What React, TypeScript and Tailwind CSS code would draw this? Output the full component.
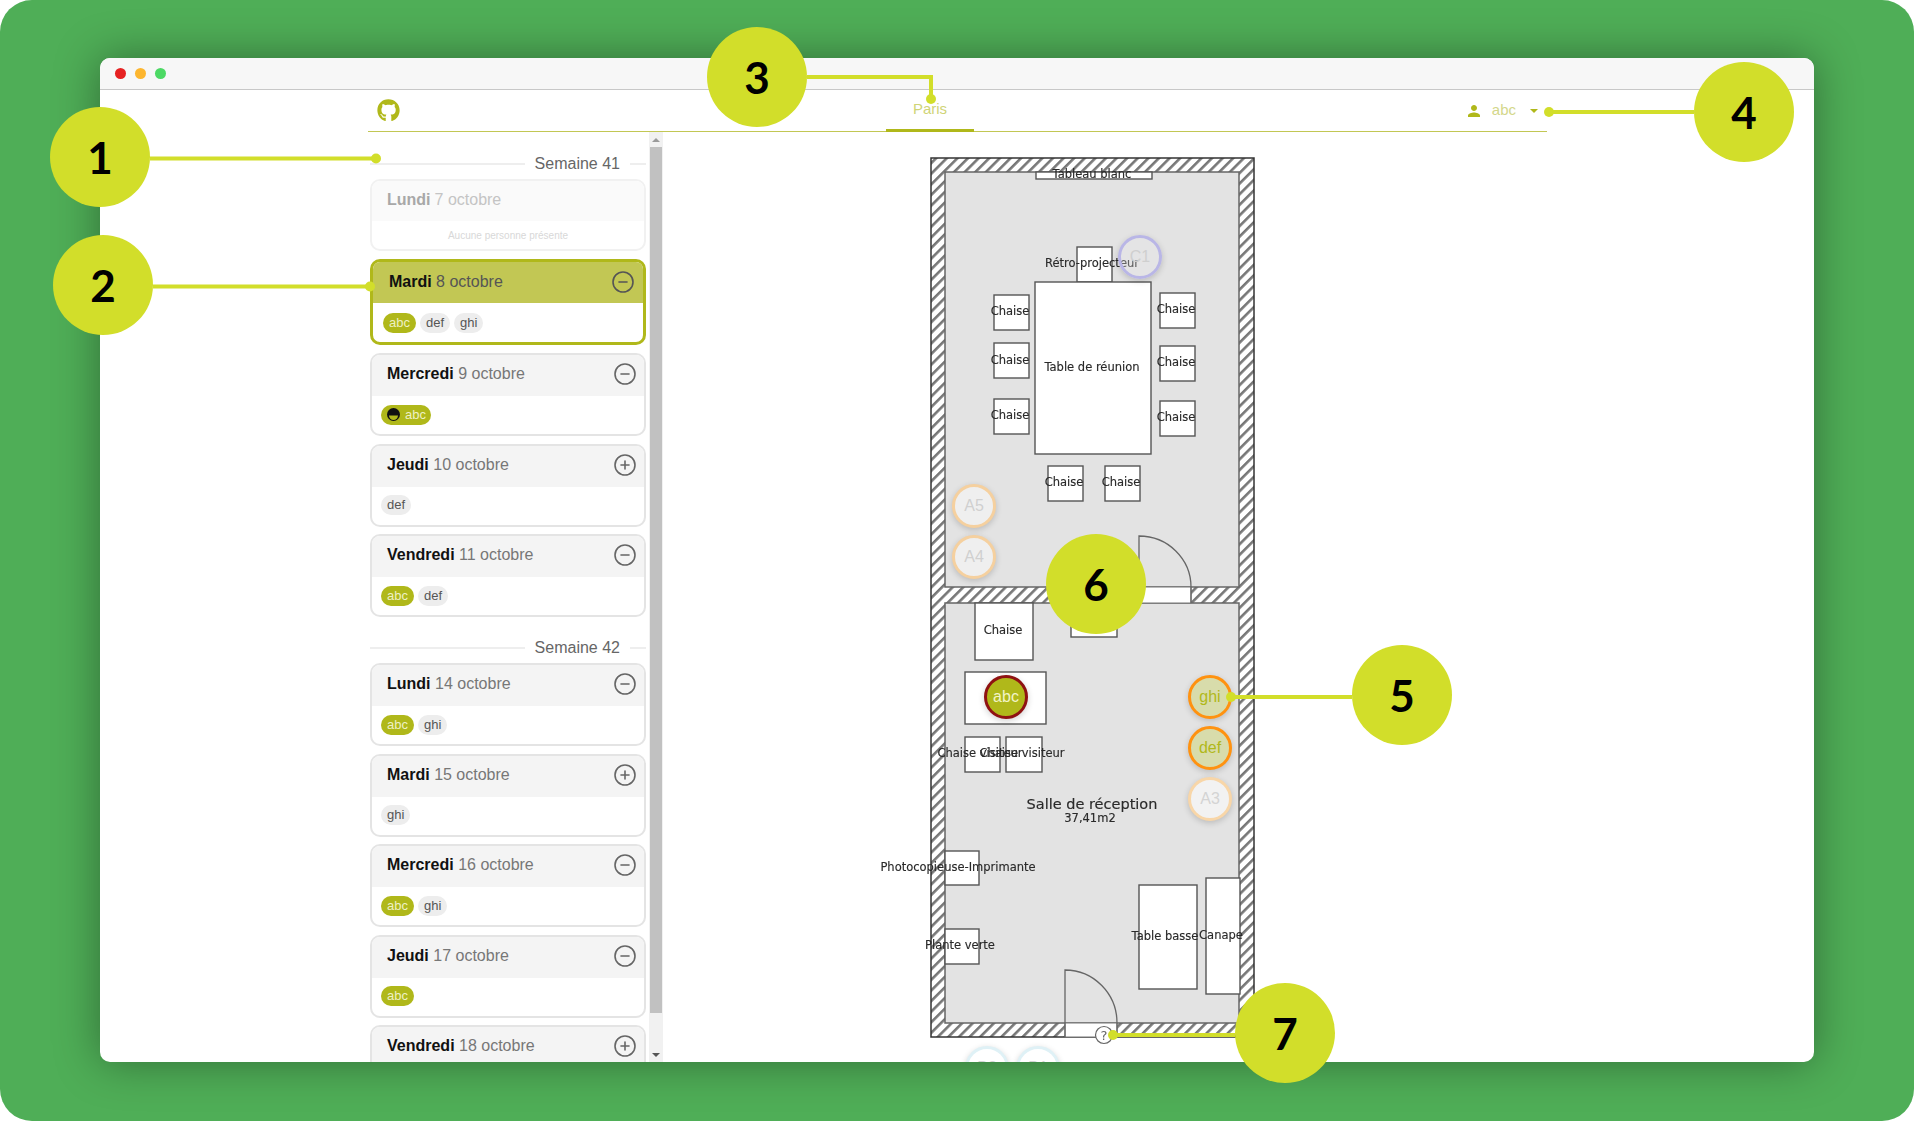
import { CircleMinus, CirclePlus } from "lucide-react";
import { FaGithub } from "react-icons/fa";

type Day = { name: string; date: string; action: "minus" | "plus"; people: string[]; avatar?: boolean };

const WEEK_41: Day[] = [
  { name: "Mercredi", date: "9 octobre", action: "minus", people: ["abc"], avatar: true },
  { name: "Jeudi", date: "10 octobre", action: "plus", people: ["def"] },
  { name: "Vendredi", date: "11 octobre", action: "minus", people: ["abc", "def"] },
];

const WEEK_42: Day[] = [
  { name: "Lundi", date: "14 octobre", action: "minus", people: ["abc", "ghi"] },
  { name: "Mardi", date: "15 octobre", action: "plus", people: ["ghi"] },
  { name: "Mercredi", date: "16 octobre", action: "minus", people: ["abc", "ghi"] },
  { name: "Jeudi", date: "17 octobre", action: "minus", people: ["abc"] },
  { name: "Vendredi", date: "18 octobre", action: "plus", people: [] },
];

// x, y are the centre of the seat in page coordinates
const SEATS = [
  { label: "C1", x: 1140, y: 257, cls: "border-[#b9b6e6] bg-[#e8e8ec]/30 text-[#cfcfcf]" },
  { label: "A5", x: 974, y: 506, cls: "border-[#f5d09f] bg-[#efefef] text-[#d0d0d0]" },
  { label: "A4", x: 974, y: 557, cls: "border-[#f5d09f] bg-[#efefef] text-[#d0d0d0]" },
  { label: "abc", x: 1006, y: 697, cls: "border-[#8f1212] bg-[#b0b81a] text-[#f2f4c8]" },
  { label: "ghi", x: 1210, y: 697, cls: "border-[#ff9210] bg-[#d8dcab] text-[#b0b81a]" },
  { label: "def", x: 1210, y: 748, cls: "border-[#ff9210] bg-[#d8dcab] text-[#b0b81a]" },
  { label: "A3", x: 1210, y: 799, cls: "border-[#f8d6a8] bg-[#f2f2f2] text-[#d4d4d4]" },
  { label: "B2", x: 987, y: 1068, cls: "border-[#dff1f6] bg-white text-[#d4d4d4]" },
  { label: "B1", x: 1038, y: 1068, cls: "border-[#dff1f6] bg-white text-[#d4d4d4]" },
];

const CALLOUTS = [
  { n: 1, x: 100, y: 157 },
  { n: 2, x: 103, y: 285 },
  { n: 3, x: 757, y: 77 },
  { n: 4, x: 1744, y: 112 },
  { n: 5, x: 1402, y: 695 },
  { n: 6, x: 1096, y: 584 },
  { n: 7, x: 1285, y: 1033 },
];

// x, y, w, h of the white furniture boxes
const FURNITURE = [
  [1036, 172, 116, 7],
  [1077, 247, 35, 35],
  [1035, 282, 116, 172],
  [994, 295, 35, 35],
  [994, 343, 35, 35],
  [994, 399, 35, 35],
  [1160, 293, 35, 35],
  [1160, 346, 35, 35],
  [1160, 401, 35, 35],
  [1048, 466, 35, 35],
  [1105, 466, 35, 35],
  [975, 603, 58, 57],
  [1071, 603, 46, 34],
  [965, 672, 81, 52],
  [965, 737, 35, 35],
  [1006, 737, 36, 35],
  [945, 851, 34, 34],
  [945, 929, 34, 35],
  [1139, 885, 58, 104],
  [1206, 878, 34, 116],
];

// x, y, text for the labels drawn on the plan
const PLAN_LABELS: [number, number, string][] = [
  [1092, 178, "Tableau blanc"],
  [1092, 267, "Rétro-projecteur"],
  [1092, 371, "Table de réunion"],
  [1010, 315, "Chaise"],
  [1010, 364, "Chaise"],
  [1010, 419, "Chaise"],
  [1176, 313, "Chaise"],
  [1176, 366, "Chaise"],
  [1176, 421, "Chaise"],
  [1064, 486, "Chaise"],
  [1121, 486, "Chaise"],
  [1003, 634, "Chaise"],
  [980, 757, "Chaise visiteur"],
  [1022, 757, "Chaise visiteur"],
  [958, 871, "Photocopieuse-Imprimante"],
  [960, 949, "Plante verte"],
  [1165, 940, "Table basse"],
  [1221, 939, "Canape"],
];

function Pill({ label, avatar }: { label: string; avatar?: boolean }) {
  const own = label === "abc";
  return (
    <span
      className={`flex h-[20px] items-center gap-[5px] rounded-full text-[13px] ${avatar ? "pl-[6px] pr-[5px]" : "px-[6px]"} ${
        own ? "bg-[#b0b81a] text-[#eef0c4]" : "bg-[#ededed] text-[#555]"
      }`}
    >
      {avatar && (
        <svg width="13" height="13" viewBox="0 0 13 13">
          <circle cx="6.5" cy="6.5" r="6.5" fill="#111" />
          <path d="M2 7.5h9a4.5 4.5 0 0 1-9 0z" fill="#b0b81a" />
        </svg>
      )}
      {label}
    </span>
  );
}

function DayCard({ day }: { day: Day }) {
  const Icon = day.action === "minus" ? CircleMinus : CirclePlus;
  return (
    <div className="mb-[7.5px] h-[83px] shrink-0 overflow-hidden rounded-[10px] border-2 border-[#e4e4e4] bg-white">
      <div className="flex h-[41px] items-center justify-between bg-[#f4f4f4] pb-[3px] pl-[15px] pr-[7px]">
        <span className="text-[16px] text-[#777]">
          <b className="text-[#111]">{day.name}</b> {day.date}
        </span>
        <Icon size={24} strokeWidth={1.6} className="text-[#666]" />
      </div>
      <div className="flex gap-[4px] pl-[9px] pt-[8.5px]">
        {day.people.map((p) => (
          <Pill key={p} label={p} avatar={day.avatar} />
        ))}
      </div>
    </div>
  );
}

function WeekHeading({ label }: { label: string }) {
  return (
    <div className="flex h-[30px] shrink-0 items-center gap-[10px] pb-[1px] text-[16px] text-[#666]">
      <span className="h-[2px] flex-1 bg-[#eeeeee]" />
      {label}
      <span className="h-[2px] w-[16px] bg-[#eeeeee]" />
    </div>
  );
}

function Sidebar() {
  return (
    <div className="ml-[270px] flex w-[293px] shrink-0">
      <div className="flex w-[276px] flex-col overflow-hidden pt-[17px]">
        <WeekHeading label="Semaine 41" />
        <div className="mb-[8px] h-[72px] shrink-0 overflow-hidden rounded-[10px] border-2 border-[#f1f1f1] bg-white">
          <div className="flex h-[40px] items-center bg-[#fafafa] pb-[3px] pl-[15px] text-[16px] text-[#c4c4c4]">
            <b className="mr-[4px] text-[#a8a8a8]">Lundi</b> 7 octobre
          </div>
          <p className="pt-[7px] text-center text-[10px] text-[#d8d8d8]">Aucune personne présente</p>
        </div>
        <div className="mb-[8px] h-[86px] shrink-0 overflow-hidden rounded-[10px] border-[3px] border-[#b0b81a] bg-white">
          <div className="flex h-[41px] items-center justify-between bg-[#c2c754] pb-[1px] pl-[16px] pr-[8px]">
            <span className="text-[16px] text-[#555]">
              <b className="text-[#111]">Mardi</b> 8 octobre
            </span>
            <CircleMinus size={24} strokeWidth={1.6} className="text-[#555]" />
          </div>
          <div className="flex gap-[4px] pl-[10px] pt-[10px]">
            <Pill label="abc" />
            <Pill label="def" />
            <Pill label="ghi" />
          </div>
        </div>
        {WEEK_41.map((d) => (
          <DayCard key={d.date} day={d} />
        ))}
        <div className="h-[8.5px] shrink-0" />
        <WeekHeading label="Semaine 42" />
        {WEEK_42.map((d) => (
          <DayCard key={d.date} day={d} />
        ))}
      </div>
      <div className="ml-[3px] flex w-[14px] flex-col bg-[#f1f1f1]">
        <div className="flex h-[15px] shrink-0 items-center justify-center">
          <span className="h-0 w-0 border-x-[4px] border-b-[4px] border-x-transparent border-b-[#9a9a9a]" />
        </div>
        <div className="mx-[1px] h-[866px] shrink-0 bg-[#c1c1c1]" />
        <div className="flex flex-1 items-end justify-center pb-[5px]">
          <span className="h-0 w-0 border-x-[4px] border-t-[4px] border-x-transparent border-t-[#555]" />
        </div>
      </div>
    </div>
  );
}

function FloorPlan() {
  return (
    <svg
      viewBox="663 132 1151 930"
      className="absolute inset-0 h-full w-full blur-[0.6px]"
      fontFamily="'DejaVu Sans', sans-serif"
    >
      <defs>
        <pattern id="hatch" width="7.5" height="7.5" patternUnits="userSpaceOnUse" patternTransform="rotate(45)">
          <rect width="7.5" height="7.5" fill="#fff" />
          <rect width="2.6" height="7.5" fill="#777" />
        </pattern>
      </defs>
      <rect x="931" y="158" width="323" height="879" fill="url(#hatch)" stroke="#333" strokeWidth="1.5" />
      <rect x="945" y="172" width="294" height="415" fill="#e3e3e3" stroke="#666" strokeWidth="1.5" />
      <rect x="945" y="603" width="294" height="420" fill="#e3e3e3" stroke="#666" strokeWidth="1.5" />

      {/* doors */}
      <rect x="1139" y="587" width="52" height="16" fill="#fff" stroke="#777" />
      <path d="M1139 587V536A52 51 0 0 1 1191 587V603" fill="none" stroke="#666" strokeWidth="1.3" />
      <rect x="1065" y="1023" width="52" height="14" fill="#fff" stroke="#777" />
      <path d="M1065 1037V970A52 53 0 0 1 1117 1023V1037" fill="none" stroke="#666" strokeWidth="1.3" />

      {FURNITURE.map(([x, y, w, h]) => (
        <rect key={`${x}-${y}`} x={x} y={y} width={w} height={h} fill="#fff" stroke="#555" strokeWidth="1.4" />
      ))}

      <g fontSize="11.5" fill="#2a2a2a" stroke="#2a2a2a" strokeWidth="0.15" textAnchor="middle">
        {PLAN_LABELS.map(([x, y, t]) => (
          <text key={`${x}-${y}`} x={x} y={y}>
            {t}
          </text>
        ))}
        <text x="1092" y="809" fontSize="14.5">
          Salle de réception
        </text>
        <text x="1090" y="822" fontSize="11.5">
          37,41m2
        </text>
      </g>

      <circle cx="1104" cy="1035" r="8.5" fill="#fff" stroke="#666" strokeWidth="1.2" />
      <text x="1104" y="1040" fontSize="13" fill="#666" textAnchor="middle">
        ?
      </text>
    </svg>
  );
}

function Seat({ label, x, y, cls }: { label: string; x: number; y: number; cls: string }) {
  return (
    <div
      className={`absolute flex h-[44px] w-[44px] items-center justify-center rounded-full border-[3px] text-[16px] shadow-[0_2px_6px_rgba(0,0,0,0.18)] ${cls}`}
      style={{ left: x - 22 - 663, top: y - 22 - 132 }}
    >
      {label}
    </div>
  );
}

export default function App() {
  return (
    <div className="relative h-[1121px] w-[1914px] overflow-hidden bg-white font-['Liberation_Sans',Arial,sans-serif]">
      <div className="h-full rounded-[32px] bg-[#4fae57] pb-[59px] pl-[100px] pr-[100px] pt-[58px]">
        <div className="flex h-full flex-col overflow-hidden rounded-[10px] bg-white shadow-[0_0_45px_rgba(0,0,0,0.38)]">
          {/* title bar */}
          <div className="flex h-[32px] shrink-0 items-center gap-[9px] border-b border-[#c8c8c8] bg-[#f7f7f7] pb-[1px] pl-[15px]">
            <span className="h-[11px] w-[11px] rounded-full bg-[#e62222]" />
            <span className="h-[11px] w-[11px] rounded-full bg-[#fdb62f]" />
            <span className="h-[11px] w-[11px] rounded-full bg-[#4cd964]" />
          </div>
          {/* nav */}
          <div className="ml-[268px] flex h-[42px] w-[1179px] shrink-0 items-center border-b border-[#c2c754] pl-[9px] pr-[9px]">
            <FaGithub size={23} className="text-[#b0b81a]" />
            <div className="ml-[486px] flex h-[42px] w-[88px] items-center justify-center border-b-[3px] border-[#b0b81a] text-[15px] text-[#cfd476]">
              Paris
            </div>
            <div className="ml-auto flex items-center text-[15px] text-[#d3d78a]">
              <svg width="18" height="18" viewBox="0 0 24 24" fill="#b0b81a" className="mr-[9px]">
                <path d="M12 12c2.21 0 4-1.79 4-4s-1.79-4-4-4-4 1.79-4 4 1.79 4 4 4zm0 2c-2.67 0-8 1.34-8 4v2h16v-2c0-2.66-5.33-4-8-4z" />
              </svg>
              abc
              <span className="ml-[14px] h-0 w-0 border-x-[4px] border-t-[4px] border-x-transparent border-t-[#b0b81a]" />
            </div>
          </div>
          {/* body */}
          <div className="flex min-h-0 flex-1">
            <Sidebar />
            <div className="relative flex-1 overflow-hidden">
              <FloorPlan />
              {SEATS.map((s) => (
                <Seat key={s.label} {...s} />
              ))}
            </div>
          </div>
        </div>
      </div>

      {/* callout leaders */}
      <svg className="pointer-events-none absolute inset-0" width="1914" height="1121" fill="#d2de2a">
        <g stroke="#d2de2a" strokeWidth="4" fill="none">
          <path d="M150 158.5H376" />
          <path d="M153 286.5H370" />
          <path d="M807 77H931V99" />
          <path d="M1549 112H1694" />
          <path d="M1231 697H1352" />
          <path d="M1113 1035H1235" />
        </g>
        <circle cx="376" cy="158.5" r="5" />
        <circle cx="370" cy="286.5" r="5" />
        <circle cx="931" cy="99" r="5" />
        <circle cx="1549" cy="112" r="5" />
        <circle cx="1231" cy="697" r="5" />
        <circle cx="1113" cy="1035" r="5" />
      </svg>
      {CALLOUTS.map((c) => (
        <div
          key={c.n}
          className="absolute flex h-[100px] w-[100px] items-center justify-center rounded-full bg-[#d2de2a] font-['Lato',sans-serif] text-[44px] font-bold text-black"
          style={{ left: c.x - 50, top: c.y - 50 }}
        >
          {c.n}
        </div>
      ))}
    </div>
  );
}
